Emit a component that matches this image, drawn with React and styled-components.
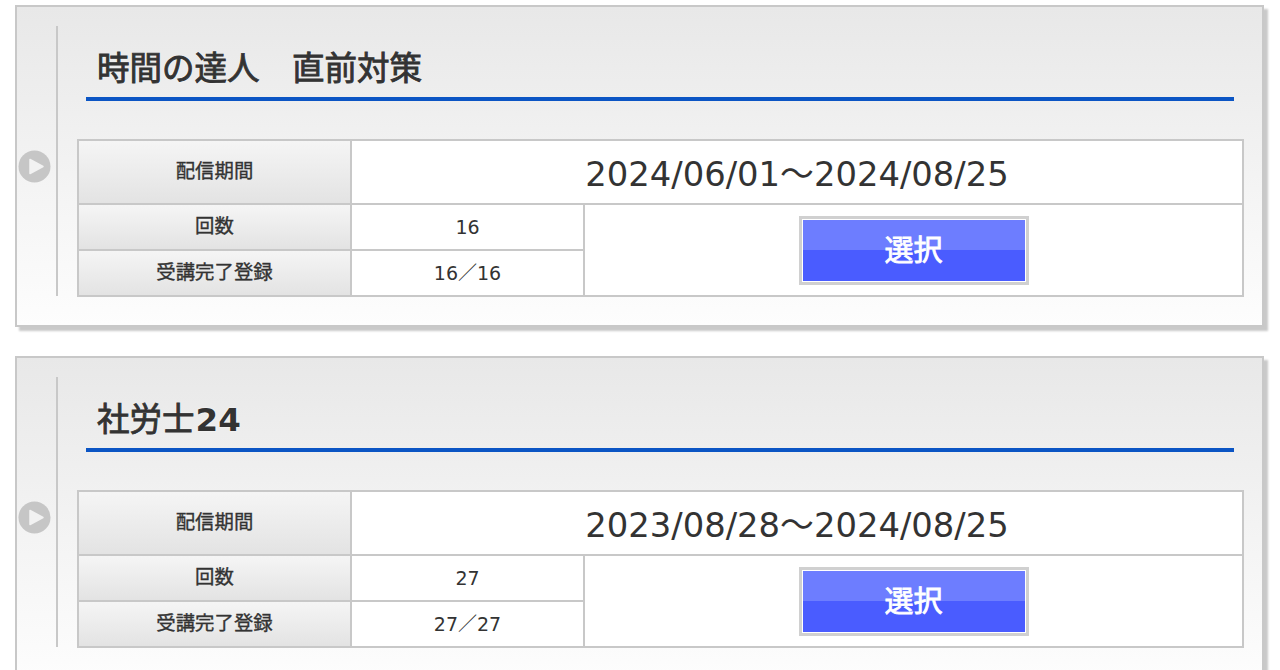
import styled, { createGlobalStyle } from 'styled-components';

const GlobalStyle = createGlobalStyle`
  html, body {
    margin: 0;
    height: 100%;
    overflow: hidden;
    background: #fff;
  }
  body {
    font-family: "DejaVu Sans", "Noto Sans CJK JP", sans-serif;
    color: #333;
  }
`;

const Page = styled.div`
  display: flex;
  flex-direction: column;
  gap: 29px;
  padding: 5px 0 0 15px;
`;

const Card = styled.section`
  box-sizing: border-box;
  width: 1249px;
  height: 322px;
  flex-shrink: 0;
  padding: 19px 19px 0 39px;
  border: 2px solid #c8c8c8;
  background: linear-gradient(#e8e8e8, #fdfdfd);
  box-shadow: 4px 4px 2px #c9c9c9;
`;

const Inner = styled.div`
  position: relative;
  box-sizing: border-box;
  height: 270px;
  padding-left: 19px;
  border-left: 2px solid #c8c8c8;
`;

const Heading = styled.h2`
  box-sizing: border-box;
  height: 75px;
  margin: 0 9px;
  padding: 21px 0 0 11px;
  border-bottom: 4px solid #0b55c4;
  font-family: "DejaVu Sans", "Noto Sans CJK JP", sans-serif;
  font-size: 32.5px;
  font-weight: 400;
  -webkit-text-stroke: 0.9px #333;
  line-height: 44px;
  color: #333;
  text-shadow: 0 0 2px #fff;
  white-space: pre;
`;

const HeadingSuffix = styled.span`
  margin-left: 1px;
  font-weight: 700;
  -webkit-text-stroke: 0;
`;

const Marker = styled.svg`
  position: absolute;
  left: -40px;
  top: 124px;
  width: 33px;
  height: 33px;
`;

const Schedule = styled.table`
  box-sizing: border-box;
  width: 1167px;
  margin-top: 38px;
  border-collapse: collapse;
  table-layout: fixed;
  background: #fff;
`;

const Label = styled.th`
  height: ${(p) => p.$height}px;
  padding: 0 0 4px;
  box-sizing: content-box;
  border: 2px solid #c8c8c8;
  background: linear-gradient(#f5f5f5, #e3e3e3);
  font-family: "Noto Sans CJK JP", sans-serif;
  font-size: 19.4px;
  font-weight: 400;
  line-height: 24px;
  -webkit-text-stroke: 0.35px #333;
  color: #333;
`;

const Value = styled.td`
  padding: 0;
  border: 2px solid #c8c8c8;
  text-align: center;
  font-size: 19px;
  line-height: 22px;
  color: #333;
`;

const Period = styled(Value)`
  padding-top: 6px;
  font-size: 33.8px;
  line-height: 40px;
`;

const SelectButton = styled.button`
  display: block;
  box-sizing: border-box;
  width: 230px;
  height: 69px;
  margin: 0 auto;
  padding: 0 0 4px;
  border: 3px solid #d0d0d0;
  outline: 1px solid #fff;
  outline-offset: -4px;
  background: linear-gradient(#6d7dff 0 50%, #4a5cff 50% 100%);
  font-family: "Noto Sans CJK JP", sans-serif;
  font-size: 29px;
  font-weight: 400;
  -webkit-text-stroke: 0.8px #fff;
  color: #fff;
`;

const courses = [
  { title: '時間の達人　直前対策', period: '2024/06/01～2024/08/25', count: '16', done: '16／16' },
  { title: '社労士', suffix: '24', period: '2023/08/28～2024/08/25', count: '27', done: '27／27' },
];

function CourseCard({ title, suffix, period, count, done }) {
  return (
    <Card>
      <Inner>
        <Heading>
          {title}
          {suffix && <HeadingSuffix>{suffix}</HeadingSuffix>}
        </Heading>
        <Marker viewBox="0 0 33 33">
          <circle cx="16.5" cy="16.5" r="16" fill="#c6c6c6" />
          <path d="M12 9.5 L25 16.5 L12 23.5 Z" fill="#f2f2f2" stroke="#f2f2f2" strokeWidth="1.5" strokeLinejoin="round" />
        </Marker>
        <Schedule>
          <colgroup>
            <col width="273" />
            <col width="233" />
            <col />
          </colgroup>
          <tbody>
            <tr>
              <Label $height={58}>配信期間</Label>
              <Period colSpan={2}>{period}</Period>
            </tr>
            <tr>
              <Label $height={40}>回数</Label>
              <Value>{count}</Value>
              <Value rowSpan={2}>
                <SelectButton>選択</SelectButton>
              </Value>
            </tr>
            <tr>
              <Label $height={40}>受講完了登録</Label>
              <Value>{done}</Value>
            </tr>
          </tbody>
        </Schedule>
      </Inner>
    </Card>
  );
}

export default function App() {
  return (
    <>
      <GlobalStyle />
      <Page>
        {courses.map((course) => (
          <CourseCard key={course.title} {...course} />
        ))}
      </Page>
    </>
  );
}
